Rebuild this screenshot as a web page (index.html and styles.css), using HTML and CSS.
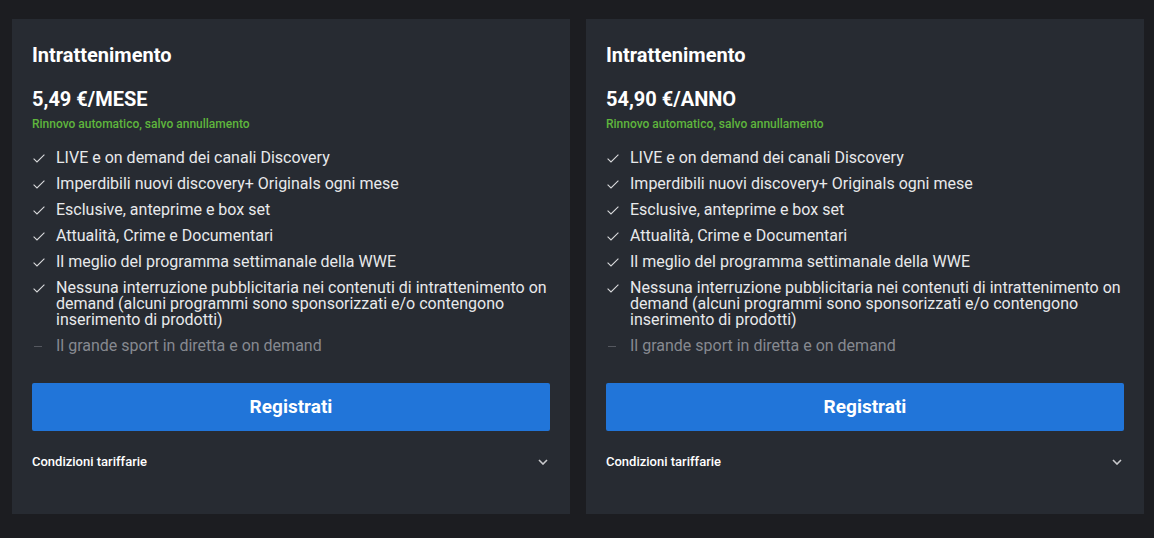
FILE: index.html
```html
<!DOCTYPE html>
<html lang="it">
<head>
<meta charset="utf-8">
<link rel="stylesheet" href="styles.css">
</head>
<body>
<div class="plans">
  <div class="card">
    <h2 class="title">Intrattenimento</h2>
    <div class="price">5,49 €/MESE</div>
    <div class="renew">Rinnovo automatico, salvo annullamento</div>
    <ul class="features">
      <li><svg class="ico" viewBox="0 0 12 9"><path d="M0.6 4.6 L4 7.9 L11.4 0.6" /></svg><span>LIVE e on demand dei canali Discovery</span></li>
      <li><svg class="ico" viewBox="0 0 12 9"><path d="M0.6 4.6 L4 7.9 L11.4 0.6" /></svg><span>Imperdibili nuovi discovery+ Originals ogni mese</span></li>
      <li><svg class="ico" viewBox="0 0 12 9"><path d="M0.6 4.6 L4 7.9 L11.4 0.6" /></svg><span>Esclusive, anteprime e box set</span></li>
      <li><svg class="ico" viewBox="0 0 12 9"><path d="M0.6 4.6 L4 7.9 L11.4 0.6" /></svg><span>Attualità, Crime e Documentari</span></li>
      <li><svg class="ico" viewBox="0 0 12 9"><path d="M0.6 4.6 L4 7.9 L11.4 0.6" /></svg><span>Il meglio del programma settimanale della WWE</span></li>
      <li><svg class="ico" viewBox="0 0 12 9"><path d="M0.6 4.6 L4 7.9 L11.4 0.6" /></svg><span>Nessuna interruzione pubblicitaria nei contenuti di intrattenimento on demand (alcuni programmi sono sponsorizzati e/o contengono inserimento di prodotti)</span></li>
      <li class="off"><span class="dash"></span><span>Il grande sport in diretta e on demand</span></li>
    </ul>
    <button class="cta">Registrati</button>
    <div class="terms"><span>Condizioni tariffarie</span><svg class="chev" viewBox="0 0 10 6"><path d="M1 1 L5 5 L9 1" /></svg></div>
  </div>
  <div class="card">
    <h2 class="title">Intrattenimento</h2>
    <div class="price">54,90 €/ANNO</div>
    <div class="renew">Rinnovo automatico, salvo annullamento</div>
    <ul class="features">
      <li><svg class="ico" viewBox="0 0 12 9"><path d="M0.6 4.6 L4 7.9 L11.4 0.6" /></svg><span>LIVE e on demand dei canali Discovery</span></li>
      <li><svg class="ico" viewBox="0 0 12 9"><path d="M0.6 4.6 L4 7.9 L11.4 0.6" /></svg><span>Imperdibili nuovi discovery+ Originals ogni mese</span></li>
      <li><svg class="ico" viewBox="0 0 12 9"><path d="M0.6 4.6 L4 7.9 L11.4 0.6" /></svg><span>Esclusive, anteprime e box set</span></li>
      <li><svg class="ico" viewBox="0 0 12 9"><path d="M0.6 4.6 L4 7.9 L11.4 0.6" /></svg><span>Attualità, Crime e Documentari</span></li>
      <li><svg class="ico" viewBox="0 0 12 9"><path d="M0.6 4.6 L4 7.9 L11.4 0.6" /></svg><span>Il meglio del programma settimanale della WWE</span></li>
      <li><svg class="ico" viewBox="0 0 12 9"><path d="M0.6 4.6 L4 7.9 L11.4 0.6" /></svg><span>Nessuna interruzione pubblicitaria nei contenuti di intrattenimento on demand (alcuni programmi sono sponsorizzati e/o contengono inserimento di prodotti)</span></li>
      <li class="off"><span class="dash"></span><span>Il grande sport in diretta e on demand</span></li>
    </ul>
    <button class="cta">Registrati</button>
    <div class="terms"><span>Condizioni tariffarie</span><svg class="chev" viewBox="0 0 10 6"><path d="M1 1 L5 5 L9 1" /></svg></div>
  </div>
</div>
</body>
</html>
```
FILE: styles.css
```css
html, body {
  margin: 0;
  padding: 0;
  background: #1c1d21;
  font-family: Roboto, "Liberation Sans", Arial, sans-serif;
  color: #ffffff;
}
.plans {
  display: flex;
  gap: 16px;
  padding: 19px 10px 24px 12px;
}
.card {
  flex: 1;
  background: #272b32;
  padding: 24px 20px 44px 20px;
  display: flex;
  flex-direction: column;
}
.title {
  margin: 0;
  font-size: 20px;
  line-height: 24px;
  font-weight: 700;
  color: #ffffff;
}
.price {
  margin-top: 20px;
  font-size: 20px;
  line-height: 24px;
  font-weight: 700;
}
.renew {
  margin-top: 5px;
  font-size: 12px;
  line-height: 16px;
  font-weight: 500;
  color: #5fb63d;
}
.features {
  list-style: none;
  margin: 18px 0 0 0;
  padding: 0;
  display: flex;
  flex-direction: column;
  gap: 10px;
}
.features li {
  display: flex;
  align-items: flex-start;
  font-size: 16px;
  line-height: 16px;
  color: #e8e9eb;
}
.features li.off {
  color: #868990;
}
.ico {
  flex: none;
  width: 12px;
  height: 9px;
  margin: 4px 11px 0 1px;
  fill: none;
  stroke: #d9dadc;
  stroke-width: 1.1;
}
.dash {
  flex: none;
  width: 8px;
  height: 1px;
  background: #55585f;
  margin: 8px 14px 0 2px;
}
.cta {
  margin-top: 29px;
  height: 48px;
  border: 0;
  border-radius: 2px;
  background: #2175d9;
  color: #ffffff;
  font-family: Roboto, "Liberation Sans", Arial, sans-serif;
  font-size: 19px;
  font-weight: 700;
  padding: 0 0 2px 0;
}
.terms {
  margin-top: 23px;
  display: flex;
  justify-content: space-between;
  align-items: center;
  font-size: 13px;
  line-height: 16px;
  font-weight: 500;
  color: #ffffff;
}
.chev {
  width: 10px;
  height: 6px;
  margin-right: 2px;
  fill: none;
  stroke: #c9cacd;
  stroke-width: 1.6;
}
```
